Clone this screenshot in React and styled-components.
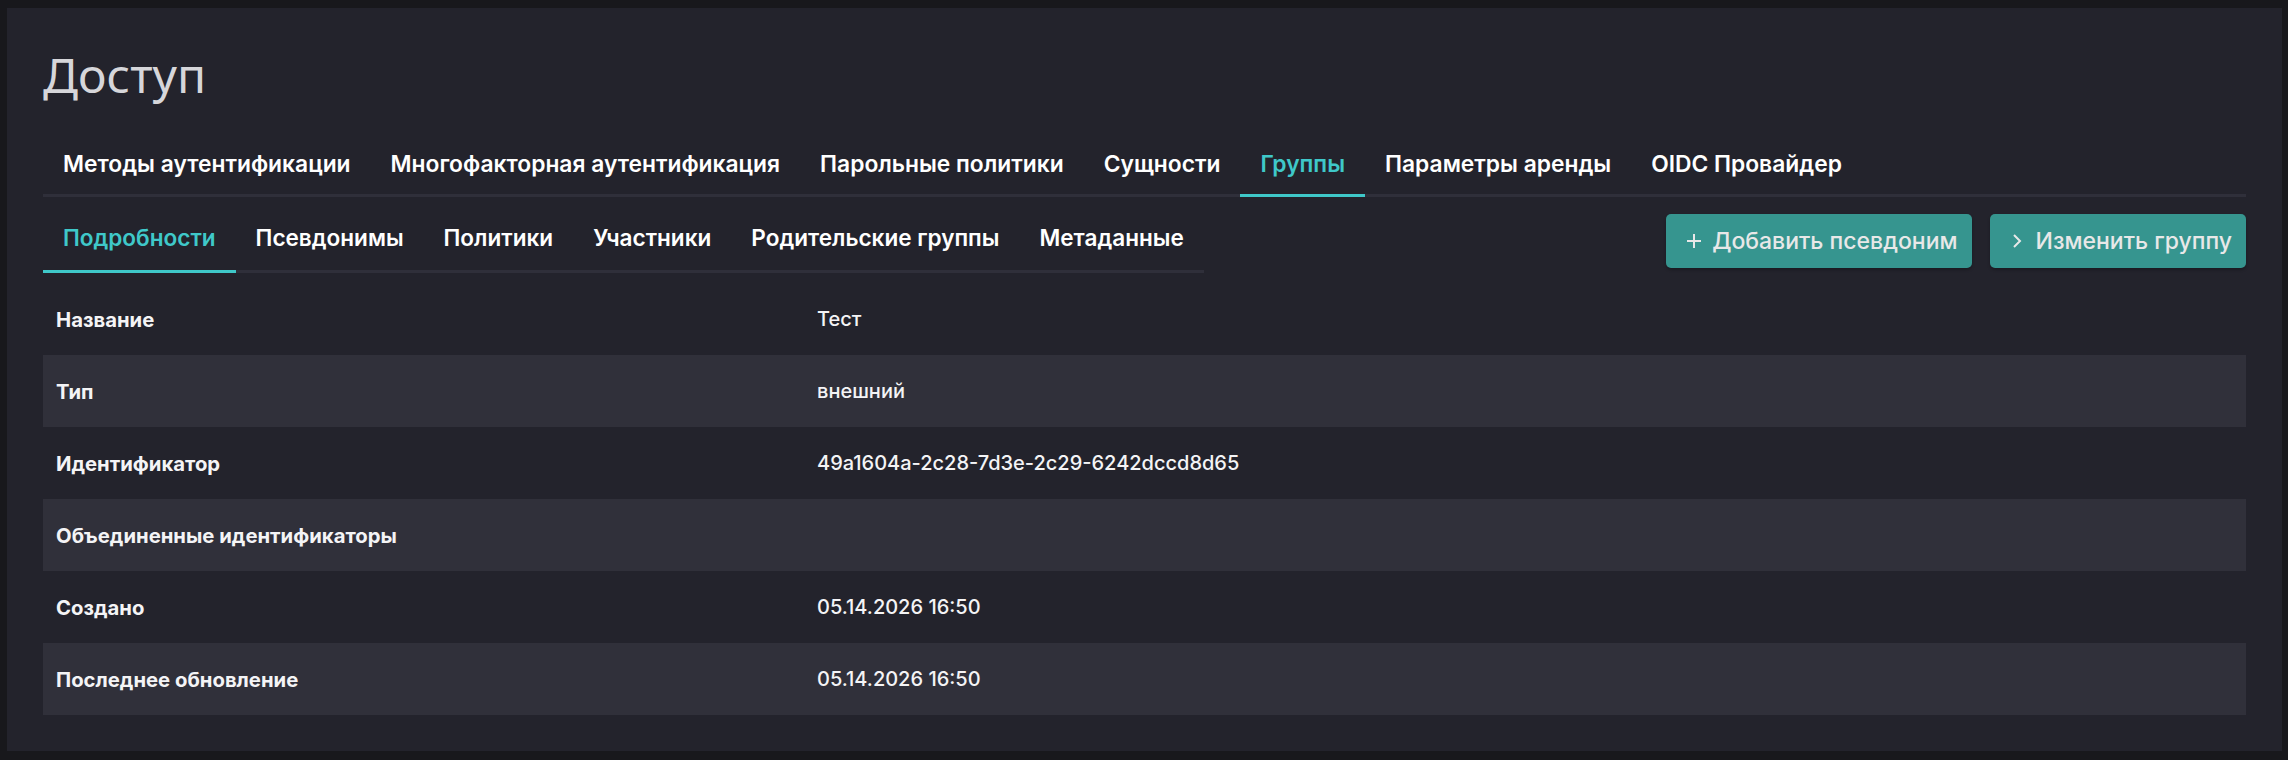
import React from 'react';
import styled, { createGlobalStyle } from 'styled-components';

const GlobalStyle = createGlobalStyle`
    html, body {
        margin: 0;
        padding: 0;
        background: #18181c;
    }
    * {
        box-sizing: border-box;
    }
`;

const Page = styled.div`
    height: 760px;
    padding: 8px 6px 9px 7px;
    background: #18181c;
    font-family: "Inter", "Noto Sans", sans-serif;
`;

const Panel = styled.div`
    height: 100%;
    background: #23232c;
    padding: 0 36px 36px;
    display: flex;
    flex-direction: column;
`;

const Title = styled.h1`
    margin: 0;
    height: 133px;
    padding-top: 34px;
    font-family: "Noto Sans", sans-serif;
    font-weight: 400;
    font-size: 48px;
    line-height: 66px;
    color: #d6d6da;
`;

const TabBar = styled.div`
    display: ${p => (p.inline ? 'inline-flex' : 'flex')};
    border-bottom: 3px solid #2f2f3a;
`;

const Tab = styled.div`
    height: ${p => p.height}px;
    padding: ${p => p.offset}px 20px 0;
    display: flex;
    align-items: center;
    margin-bottom: -3px;
    border-bottom: 3px solid ${p => (p.active ? '#3fc8c9' : 'transparent')};
    color: ${p => (p.active ? '#3fc8c9' : '#ffffff')};
    font-size: ${p => p.size}px;
    font-weight: 600;
    white-space: nowrap;
`;

const SubRow = styled.div`
    display: flex;
    justify-content: space-between;
    align-items: flex-start;
`;

const Actions = styled.div`
    display: flex;
    gap: 18px;
    margin-top: 17px;
`;

const Button = styled.button`
    height: 54px;
    padding: 0 14px 0 ${p => p.padLeft}px;
    display: flex;
    align-items: center;
    gap: ${p => p.gap}px;
    background: #36958f;
    border: none;
    border-radius: 5px;
    box-shadow: 0 2px 3px rgba(0, 0, 0, 0.25);
    color: #e8e8e8;
    font-family: inherit;
    font-size: 23px;
    font-weight: 500;
    white-space: nowrap;
`;

const Table = styled.div`
    margin-top: 10px;
    display: flex;
    flex-direction: column;
`;

const Row = styled.div`
    height: 72px;
    display: grid;
    grid-template-columns: 761px 1fr;
    align-items: center;
    padding-left: 13px;
    background: ${p => (p.striped ? '#30303a' : 'transparent')};
    font-size: 20px;
    color: #f4f4f6;
`;

const Label = styled.div`
    font-weight: 700;
    font-size: 20.3px;
`;

const Value = styled.div`
    font-weight: 500;
`;

const PlusIcon = () => (
    <svg width="16" height="16" viewBox="0 0 16 16">
        <path d="M8 1v14M1 8h14" stroke="#e8e8e8" strokeWidth="2" fill="none" />
    </svg>
);

const ChevronIcon = () => (
    <svg width="10" height="16" viewBox="0 0 10 16">
        <path d="M2 2l6 6-6 6" stroke="#e8e8e8" strokeWidth="2" fill="none" />
    </svg>
);

const mainTabs = [
    'Методы аутентификации',
    'Многофакторная аутентификация',
    'Парольные политики',
    'Сущности',
    'Группы',
    'Параметры аренды',
    'OIDC Провайдер',
];

const subTabs = ['Подробности', 'Псевдонимы', 'Политики', 'Участники', 'Родительские группы', 'Метаданные'];

const details = [
    ['Название', 'Тест'],
    ['Тип', 'внешний'],
    ['Идентификатор', '49a1604a-2c28-7d3e-2c29-6242dccd8d65'],
    ['Объединенные идентификаторы', ''],
    ['Создано', '05.14.2026 16:50'],
    ['Последнее обновление', '05.14.2026 16:50'],
];

const App = () => (
    <>
        <GlobalStyle />
        <Page>
            <Panel>
                <Title>Доступ</Title>
                <TabBar>
                    {mainTabs.map(t => (
                        <Tab key={t} height={64} offset={0} size={22.8} active={t === 'Группы'}>{t}</Tab>
                    ))}
                </TabBar>
                <SubRow>
                    <TabBar inline>
                        {subTabs.map(t => (
                            <Tab key={t} height={76} offset={8} size={22.55} active={t === 'Подробности'}>{t}</Tab>
                        ))}
                    </TabBar>
                    <Actions>
                        <Button padLeft={20} gap={10}><PlusIcon />Добавить псевдоним</Button>
                        <Button padLeft={22} gap={14}><ChevronIcon />Изменить группу</Button>
                    </Actions>
                </SubRow>
                <Table>
                    {details.map(([label, value], i) => (
                        <Row key={label} striped={i % 2 === 1}>
                            <Label>{label}</Label>
                            <Value>{value}</Value>
                        </Row>
                    ))}
                </Table>
            </Panel>
        </Page>
    </>
);

export default App;
